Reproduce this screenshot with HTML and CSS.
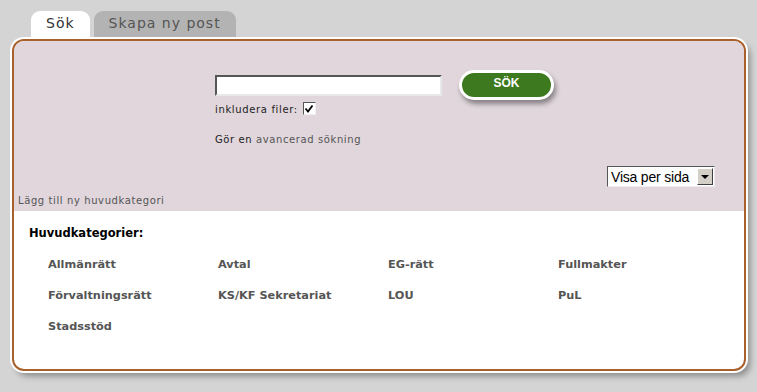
FILE: index.html
```html
<!DOCTYPE html>
<html lang="sv">
<head>
  <meta charset="UTF-8">
  <title>Sök</title>
  <link rel="stylesheet" href="styles.css">
</head>
<body>
<!-- Tabs -->
<div class="tabs">
  <a class="tab active" href="#">Sök</a>
  <a class="tab" href="#">Skapa ny post</a>
</div>

<!-- Panel -->
<div class="panel">
  <div class="search-area">
    <form class="search-form">
      <div class="search-row">
        <input class="search-input" type="text">
        <button class="search-btn" type="button">SÖK</button>
      </div>
      <label class="include">inkludera filer:
        <span class="checkbox">
          <svg width="10" height="10" viewBox="0 0 10 10"><path d="M1.5 4.5 L4 7.5 L8.5 1.5" fill="none" stroke="#000" stroke-width="1.8"/></svg>
        </span>
      </label>
      <p class="advanced">Gör en <a href="#">avancerad sökning</a></p>
    </form>
    <div class="search-bottom">
      <a class="add-link" href="#">Lägg till ny huvudkategori</a>
      <div class="select">
        <span class="select-text">Visa per sida</span>
        <span class="select-arrow"></span>
      </div>
    </div>
  </div>

  <div class="categories">
    <h2>Huvudkategorier:</h2>
    <ul class="cat-grid">
      <li><a href="#">Allmänrätt</a></li>
      <li><a href="#">Avtal</a></li>
      <li><a href="#">EG-rätt</a></li>
      <li><a href="#">Fullmakter</a></li>
      <li><a href="#">Förvaltningsrätt</a></li>
      <li><a href="#">KS/KF Sekretariat</a></li>
      <li><a href="#">LOU</a></li>
      <li><a href="#">PuL</a></li>
      <li><a href="#">Stadsstöd</a></li>
    </ul>
  </div>
</div>
</body>
</html>
```

FILE: styles.css
```css
/* Basic reset */
body {
  margin: 0;
  padding: 0;
  background: #d4d4d4;
  font-family: "DejaVu Sans", Verdana, sans-serif;
  color: #333;
  width: 757px;
  height: 392px;
  overflow: hidden;
}

/* Tabs */
.tabs {
  display: flex;
  gap: 4px;
  padding: 11px 0 0 31px;
  height: 26px;
}
.tab {
  display: block;
  height: 26px;
  line-height: 25px;
  padding: 0 15px;
  font-size: 14px;
  letter-spacing: 1px;
  color: #555;
  text-decoration: none;
  background: #b3b3b3;
  border-radius: 9px 9px 0 0;
}
.tab.active {
  background: #fff;
  color: #333;
}

/* Panel */
.panel {
  margin: 2px 0 0 12px;
  width: 730px;
  height: 328px;
  border: 2px solid #a8612c;
  border-radius: 12px;
  overflow: hidden;
  background: #fff;
  box-shadow: 0 0 0 2px #fff, 4px 5px 6px rgba(0, 0, 0, 0.35);
}

/* Search area */
.search-area {
  background: #e0d6dc;
  height: 170px;
  display: flex;
  flex-direction: column;
  justify-content: space-between;
}
.search-form {
  margin: 0;
  padding: 29px 0 0 201px;
}
.search-row {
  display: flex;
  align-items: center;
  gap: 17px;
}
.search-input {
  box-sizing: border-box;
  width: 227px;
  height: 21px;
  margin: 0;
  border: 2px solid;
  border-color: #555 #e8e8e8 #e8e8e8 #555;
  background: #fff;
}
.search-btn {
  box-sizing: border-box;
  width: 95px;
  height: 30px;
  border: 3px solid #fff;
  border-radius: 15px;
  background: #3d7a1f;
  color: #fff;
  font-family: "Liberation Sans", Arial, sans-serif;
  font-weight: bold;
  font-size: 12px;
  padding: 0 0 4px;
  box-shadow: 2px 4px 5px rgba(0, 0, 0, 0.4);
}
.include {
  display: flex;
  align-items: flex-start;
  gap: 5px;
  font-size: 10px;
  color: #222;
  letter-spacing: 0.65px;
  margin-top: -1px;
  height: 18px;
  line-height: 22px;
}
.checkbox {
  box-sizing: border-box;
  width: 13px;
  height: 13px;
  margin-top: 3px;
  border: 1px solid;
  border-color: #555 #eee #eee #555;
  background: #fff;
  display: flex;
  align-items: center;
  justify-content: center;
}
.advanced {
  margin: 17px 0 0;
  font-size: 10px;
  color: #222;
  letter-spacing: 0.6px;
}
.advanced a {
  color: #555;
  text-decoration: none;
}
.search-bottom {
  display: flex;
  justify-content: space-between;
  align-items: flex-end;
  padding: 0 29px 5px 4px;
}
.add-link {
  font-size: 10px;
  color: #555;
  text-decoration: none;
  letter-spacing: 0.6px;
}
.select {
  box-sizing: border-box;
  width: 108px;
  height: 21px;
  margin-bottom: 19px;
  display: flex;
  align-items: center;
  justify-content: space-between;
  border: 1px solid;
  border-color: #555 #eee #eee #555;
  background: #fff;
  padding: 1px;
  font-family: "Liberation Sans", Arial, sans-serif;
  font-size: 14px;
  color: #000;
}
.select-text {
  padding-left: 2px;
  letter-spacing: -0.2px;
}
.select-arrow {
  box-sizing: border-box;
  width: 16px;
  height: 17px;
  background: #d4d0c8;
  border: 1px solid;
  border-color: #fff #404040 #404040 #fff;
  display: flex;
  align-items: center;
  justify-content: center;
}
.select-arrow::after {
  content: "";
  border-left: 4px solid transparent;
  border-right: 4px solid transparent;
  border-top: 4px solid #000;
}

/* Categories */
.categories {
  padding: 15px 0 0 15px;
}
.categories h2 {
  margin: 0;
  font-size: 11.5px;
  color: #000;
  letter-spacing: 0;
}
.cat-grid {
  list-style: none;
  margin: 14px 0 0;
  padding: 0 0 0 19px;
  display: grid;
  grid-template-columns: repeat(4, 170px);
  row-gap: 13px;
}
.cat-grid li {
  height: 18px;
  line-height: 18px;
}
.cat-grid a {
  font-size: 11.3px;
  font-weight: bold;
  color: #555;
  text-decoration: none;
  letter-spacing: 0;
}
```
